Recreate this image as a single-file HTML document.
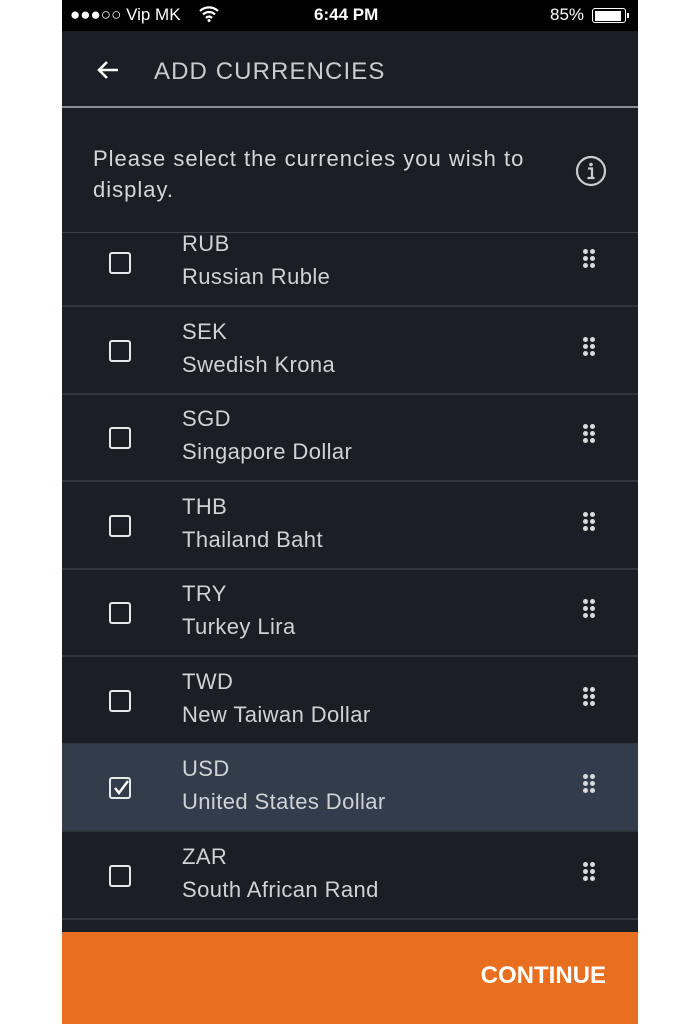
<!DOCTYPE html>
<html><head><meta charset="utf-8"><style>
*{margin:0;padding:0;box-sizing:border-box}
body{width:700px;height:1024px;background:#fff;position:relative;overflow:hidden;font-family:"Liberation Sans",sans-serif}
#app{position:absolute;left:62px;top:0;width:576px;height:1024px;background:#1b1e25;overflow:hidden}
.sb{position:absolute;top:0;left:0;width:576px;height:31px;background:#000;color:#fff;font-size:17px}
.row{position:absolute;left:0;width:576px;height:88px;border-bottom:2px solid #30353d}
.row.sel{background:#323c4b}
.cb{position:absolute;left:47px;top:33px;width:22px;height:22px;border:2px solid #e6e8ea;border-radius:3px}
.code{position:absolute;left:120px;top:12px;font-size:22px;color:#cfd2d6;letter-spacing:0.4px}
.name{position:absolute;left:120px;top:45px;font-size:22px;color:#cfd2d6;letter-spacing:0.4px}
.dots{position:absolute;left:521px;top:30px;width:12px;height:18px}
.dots i{position:absolute;width:5px;height:5px;border-radius:50%;background:#d8dadc}
</style></head><body><div id="app">
<div id="list">
</div>
<div style="position:absolute;top:0;left:0;width:576px;height:233px;background:#1b1e25;border-bottom:1px solid #3a3f47"></div>
<div class="sb"><span style="position:absolute;left:8px;top:5px">●●●○○ Vip MK</span><svg style="position:absolute;left:137px;top:6px" width="20" height="16" viewBox="0 0 20 16"><path d="M1 5a13 13 0 0 1 18 0M4 8.5a8.5 8.5 0 0 1 12 0M7 12a4 4 0 0 1 6 0" stroke="#fff" stroke-width="2.2" fill="none"/><circle cx="10" cy="14.5" r="1.5" fill="#fff"/></svg><span style="position:absolute;left:252px;top:5px;font-weight:bold">6:44 PM</span><span style="position:absolute;left:488px;top:5px">85%</span><div style="position:absolute;left:530px;top:8px;width:34px;height:15px;border:1.5px solid #fff;border-radius:3px;padding:1.5px"><div style="width:26px;height:100%;background:#fff"></div></div><div style="position:absolute;left:565px;top:13px;width:2px;height:5px;background:#fff"></div></div>
<svg style="position:absolute;left:34px;top:60px" width="24" height="20" viewBox="0 0 24 20"><path d="M22 10H3M11 2L3 10l8 8" stroke="#fff" stroke-width="2.6" fill="none"/></svg>
<div style="position:absolute;left:92px;top:58px;font-size:24px;color:#c9ccd0;letter-spacing:1.1px">ADD CURRENCIES</div>
<div style="position:absolute;left:0;top:106px;width:576px;height:2px;background:#8a8e94"></div>
<div style="position:absolute;left:31px;top:143px;font-size:22px;line-height:31px;color:#d4d7db;letter-spacing:1px">Please select the currencies you wish to<br>display.</div>
<svg style="position:absolute;left:513px;top:155px" width="32" height="32" viewBox="0 0 32 32"><circle cx="16" cy="16" r="14" stroke="#c9ccd0" stroke-width="2.2" fill="none"/><circle cx="16" cy="9.5" r="1.8" fill="#c9ccd0"/><path d="M13 13.5h4v9M12.5 23h7" stroke="#c9ccd0" stroke-width="2.2" fill="none"/></svg>
<div style="position:absolute;left:0;top:932px;width:576px;height:92px;background:#e76f1f"></div>
<div style="position:absolute;right:32px;top:962px;font-size:24px;font-weight:bold;color:#fff">CONTINUE</div>
</div>
<script>
var d=[["RUB","Russian Ruble"],["SEK","Swedish Krona"],["SGD","Singapore Dollar"],["THB","Thailand Baht"],["TRY","Turkey Lira"],["TWD","New Taiwan Dollar"],["USD","United States Dollar"],["ZAR","South African Rand"]];
var h="";d.forEach(function(r,i){var t=219+i*87.5;var s=r[0]=="USD";
h+='<div class="row'+(s?' sel':'')+'" style="top:'+t+'px"><div class="cb">'+(s?'<svg style="position:absolute;left:1px;top:0" width="18" height="18" viewBox="0 0 18 18"><path d="M3 9l4 5 9-12" stroke="#fff" stroke-width="2.4" fill="none"/></svg>':'')+'</div><div class="code">'+r[0]+'</div><div class="name">'+r[1]+'</div><div class="dots"><i style="left:0;top:0"></i><i style="left:7px;top:0"></i><i style="left:0;top:7px"></i><i style="left:7px;top:7px"></i><i style="left:0;top:14px"></i><i style="left:7px;top:14px"></i></div></div>';});
document.getElementById("list").innerHTML=h;
</script>
</body></html>
